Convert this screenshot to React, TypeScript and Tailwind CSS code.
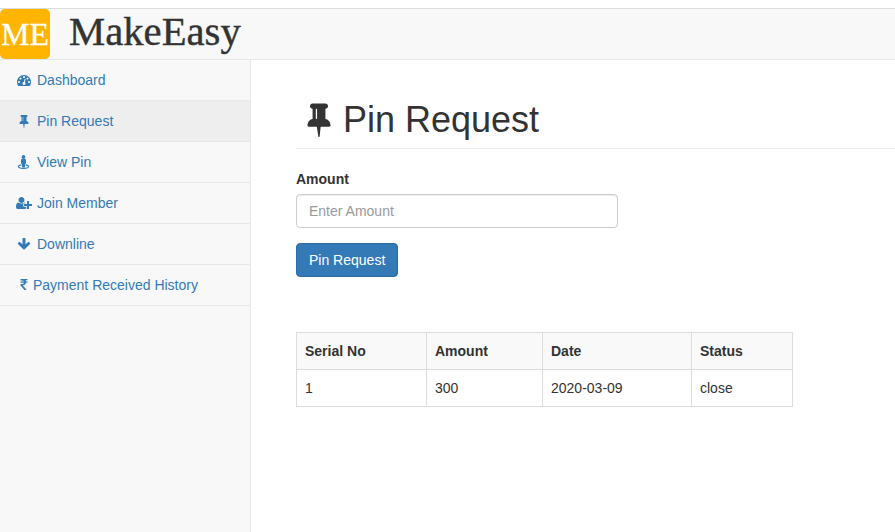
import React from "react";

const THUMB_TACK =
  "M800 864v-448q0-14-9-23t-23-9-23 9-9 23v448q0 14 9 23t23 9 23-9 9-23zm672 352q0 26-19 45t-45 19h-429l-51 483q-2 12-10.500 20.500t-20.500 8.500h-1q-27 0-32-27l-76-485h-404q-26 0-45-19t-19-45q0-123 78.500-221.500t177.500-98.500v-512q-52 0-90-38t-38-90 38-90 90-38h640q52 0 90 38t38 90-38 90-90 38v512q99 0 177.500 98.500t78.500 221.500z";
const TACHOMETER =
  "M384 1152q0-53-37.500-90.500t-90.500-37.500-90.500 37.500-37.500 90.500 37.500 90.500 90.500 37.500 90.500-37.500 37.500-90.500zm192-448q0-53-37.500-90.500t-90.500-37.500-90.500 37.500-37.500 90.500 37.500 90.500 90.500 37.500 90.500-37.500 37.500-90.500zm428 481l101-382q6-26-7.500-48.500t-38.500-29.500-48 6.500-30 39.500l-101 382q-60 5-107 43.500t-63 98.500q-20 77 20 146t117 89 146-20 89-117q16-60-6-117t-72-91zm660-33q0-53-37.500-90.500t-90.500-37.500-90.500 37.500-37.500 90.500 37.500 90.500 90.500 37.500 90.500-37.500 37.500-90.500zm-640-640q0-53-37.500-90.500t-90.500-37.500-90.500 37.500-37.500 90.500 37.500 90.500 90.500 37.500 90.500-37.500 37.500-90.500zm448 192q0-53-37.500-90.500t-90.500-37.500-90.500 37.500-37.500 90.500 37.500 90.500 90.500 37.500 90.500-37.500 37.500-90.500zm320 448q0 261-141 483-19 29-54 29h-1402q-35 0-54-29-141-221-141-483 0-182 71-348t191-286 286-191 348-71 348 71 286 191 191 286 71 348z";
const ARROW_DOWN =
  "M1675 832q0 53-37 90l-651 652q-39 37-91 37-53 0-90-37l-651-652q-38-36-38-90 0-53 38-91l74-75q39-37 91-37 53 0 90 37l294 294v-704q0-52 38-90t90-38h128q52 0 90 38t38 90v704l294-294q37-37 90-37 52 0 91 37l75 75q37 39 37 91z";
const RUPEE =
  "M1345 470v102q0 14-9 23t-23 9h-168q-23 144-129 234t-276 110q167 178 459 536 14 16 4 34-8 18-29 18h-195q-16 0-25-12-306-367-498-571-9-9-9-22v-127q0-13 9.500-22.500t22.500-9.500h112q132 0 212.500-43t102.500-125h-427q-14 0-23-9t-9-23v-102q0-14 9-23t23-9h413q-57-113-268-113h-145q-13 0-22.500-9.500t-9.500-22.500v-133q0-14 9-23t23-9h832q14 0 23 9t9 23v102q0 14-9 23t-23 9h-233q47 61 64 144h171q14 0 23 9t9 23z";
const USER_PLUS =
  "M704 896q-159 0-271.500-112.500t-112.500-271.500 112.500-271.500 271.500-112.500 271.500 112.500 112.500 271.500-112.500 271.500-271.500 112.500zm960 128h352q13 0 22.500 9.500t9.500 22.500v192q0 13-9.500 22.500t-22.500 9.500h-352v352q0 13-9.500 22.500t-22.500 9.500h-192q-13 0-22.500-9.500t-9.500-22.500v-352h-352q-13 0-22.500-9.500t-9.500-22.500v-192q0-13 9.500-22.500t22.500-9.500h352v-352q0-13 9.500-22.500t22.500-9.500h192q13 0 22.500 9.500t9.500 22.500v352zm-736 224q0 52 38 90t90 38h256v238q-68 50-171 50h-874q-121 0-194-69t-73-190q0-53 3.500-103.500t14-109 26.500-108.500 43-97.500 62-81 85.500-53.500 111.500-20q19 0 39 17 79 61 154.500 91.500t164.500 30.500 164.500-30.500 154.500-91.500q20-17 39-17 132 0 217 96h-223q-52 0-90 38t-38 90v192z";

function Glyph({ d, wide, className }: { d: string; wide?: boolean; className: string }) {
  return (
    <svg viewBox={wide ? "0 0 2048 1792" : "0 0 1792 1792"} className={className} fill="currentColor" aria-hidden="true">
      <path d={d} />
    </svg>
  );
}

function StreetView() {
  return (
    <svg viewBox="0 0 14 14" className="size-3.5" fill="currentColor" aria-hidden="true">
      <circle cx="6.5" cy="2" r="1.9" />
      <path d="M5 4h3a1 1 0 0 1 1 1v3.200a.6.6 0 0 1-.6.6H8v3a.6.6 0 0 1-.6.6H5.600a.6.6 0 0 1-.6-.6v-3h-.4a.6.6 0 0 1-.6-.6V5a1 1 0 0 1 1-1z" />
      <path
        d="M4 9.900C2.300 10.200 1.400 10.800 1.400 11.500c0 1.100 2.300 1.900 5.100 1.900s5.100-.8 5.100-1.900c0-.7-.9-1.300-2.600-1.600"
        fill="none"
        stroke="currentColor"
        strokeWidth="1.1"
        strokeLinecap="round"
      />
    </svg>
  );
}

type Item = { label: string; icon: React.ReactNode; active?: boolean; tight?: boolean };

const items: Item[] = [
  { label: "Dashboard", icon: <Glyph d={TACHOMETER} className="size-3.5" /> },
  { label: "Pin Request", icon: <Glyph d={THUMB_TACK} className="size-3.5" />, active: true },
  { label: "View Pin", icon: <StreetView /> },
  { label: "Join Member", icon: <Glyph d={USER_PLUS} wide className="h-3.5 w-4" /> },
  { label: "Downline", icon: <Glyph d={ARROW_DOWN} className="size-3.5" /> },
  { label: "Payment Received History", icon: <Glyph d={RUPEE} className="size-3.5" />, tight: true },
];

const columns = ["Serial No", "Amount", "Date", "Status"];
const rows = [["1", "300", "2020-03-09", "close"]];

export default function App() {
  return (
    <div className="flex h-[532px] flex-col overflow-hidden bg-white pt-2 font-['Liberation_Sans',Arial,sans-serif] text-sm leading-5 text-[#333]">
      <header className="flex h-[52px] shrink-0 border-y border-t-[#ddd] border-b-[#e7e7e7] bg-[#f8f8f8] font-['Liberation_Serif','Times_New_Roman',serif]">
        <div className="flex size-[50px] items-center justify-center rounded-[5px] bg-[#ffb400] text-[32px] leading-none text-white">
          <span className="[-webkit-text-stroke:0.3px_white]">ME</span>
        </div>
        <div className="pl-[19px] text-[40.7px] leading-[46px] [-webkit-text-stroke:0.4px_#333]">MakeEasy</div>
      </header>
      <div className="flex min-h-0 flex-1">
        <nav className="w-[251px] shrink-0 border-r border-[#e7e7e7] bg-[#f8f8f8]">
          <ul>
            {items.map((item) => (
              <li key={item.label} className="border-b border-[#e7e7e7]">
                <a className={`flex h-10 items-center pl-[15px] text-[#337ab7] ${item.active ? "bg-[#eee]" : ""}`}>
                  <span className="flex w-[18px] justify-center">{item.icon}</span>
                  <span className={item.tight ? "" : "pl-1"}>{item.label}</span>
                </a>
              </li>
            ))}
          </ul>
        </nav>
        <main className="flex-1 pt-10 pl-[45px]">
          <h1 className="flex h-[49px] border-b border-[#eee] pl-[5px] text-4xl leading-10">
            <Glyph d={THUMB_TACK} className="mt-px size-9" />
            <span className="pl-1.5">Pin Request</span>
          </h1>
          <form className="pt-5">
            <label className="mb-[5px] block font-bold">Amount</label>
            <input
              placeholder="Enter Amount"
              className="block h-[34px] w-[322px] rounded border border-[#ccc] bg-white px-3 shadow-[inset_0_1px_1px_rgba(0,0,0,0.075)] placeholder:text-[#999]"
            />
            <button type="button" className="mt-[15px] block h-[34px] rounded border border-[#2e6da4] bg-[#337ab7] px-3 text-white">
              Pin Request
            </button>
          </form>
          <table className="mt-[55px] w-[497px] table-fixed border-collapse text-left">
            <colgroup>
              <col className="w-[130px]" />
              <col className="w-[116px]" />
              <col className="w-[149px]" />
              <col className="w-[101px]" />
            </colgroup>
            <thead>
              <tr className="bg-[#f9f9f9]">
                {columns.map((c) => (
                  <th key={c} className="border border-[#ddd] p-2 font-bold">{c}</th>
                ))}
              </tr>
            </thead>
            <tbody>
              {rows.map((row) => (
                <tr key={row[0]}>
                  {row.map((cell) => (
                    <td key={cell} className="border border-[#ddd] p-2">{cell}</td>
                  ))}
                </tr>
              ))}
            </tbody>
          </table>
        </main>
      </div>
    </div>
  );
}
